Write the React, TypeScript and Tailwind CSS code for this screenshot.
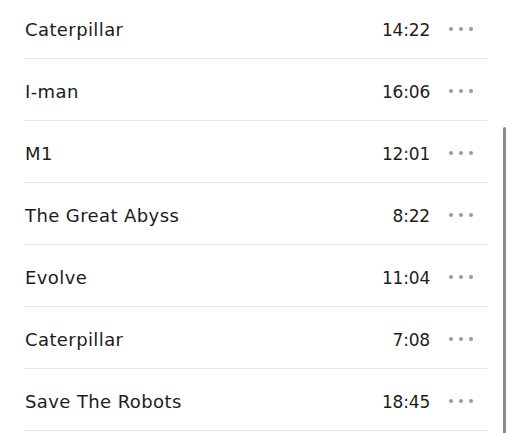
import React from "react";

const tracks = [
  { title: "Caterpillar", time: "14:22" },
  { title: "I-man", time: "16:06" },
  { title: "M1", time: "12:01" },
  { title: "The Great Abyss", time: "8:22" },
  { title: "Evolve", time: "11:04" },
  { title: "Caterpillar", time: "7:08" },
  { title: "Save The Robots", time: "18:45" },
];

export default function App() {
  return (
    <div
      className="relative w-[512px] h-[433px] overflow-hidden bg-white text-[#1c1c1c]"
      style={{ fontFamily: '"DejaVu Sans", sans-serif' }}
    >
      <div className="ml-[24px] mr-[25px] -mt-[3px]">
        {tracks.map((t, i) => (
          <div
            key={i}
            className="flex items-center h-[62px] border-b border-[#e6e6e6]"
          >
            <div className="flex-1 text-[18px] tracking-[0.4px] pl-[1px] pt-[3px]">{t.title}</div>
            <div className="text-[17px] tracking-[-0.2px] pt-[6px]">{t.time}</div>
            <div className="flex items-center gap-[6px] ml-[19px] mr-[14px] pt-[2px]">
              <span className="w-[4px] h-[4px] rounded-full bg-[#9a9a9a]" />
              <span className="w-[4px] h-[4px] rounded-full bg-[#9a9a9a]" />
              <span className="w-[4px] h-[4px] rounded-full bg-[#9a9a9a]" />
            </div>
          </div>
        ))}
      </div>
      <div className="absolute left-[503px] top-[127px] w-[3px] h-[320px] rounded-full bg-[#8a8a8a]" />
    </div>
  );
}
